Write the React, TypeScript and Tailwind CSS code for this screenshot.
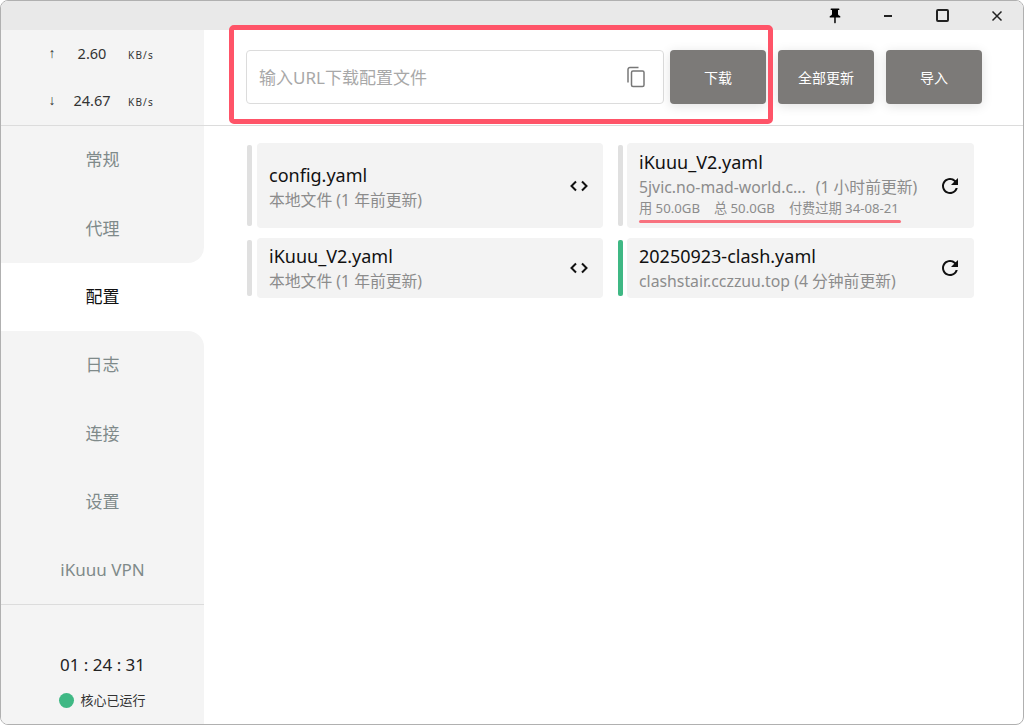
import React from 'react';
import { MdPushPin, MdRefresh } from 'react-icons/md';

const font = { fontFamily: '"Noto Sans", "Noto Sans CJK SC", sans-serif' };

const NAV = ['常规', '代理', '配置', '日志', '连接', '设置', 'iKuuu VPN'];
const ACTIVE = 2;

const CodeIcon = () => (
  <svg width="20" height="20" viewBox="0 0 20 20" fill="none" stroke="#111" strokeWidth="2">
    <path d="M7 5.5 2.5 10 7 14.5" />
    <path d="M13 5.5l4.5 4.5-4.5 4.5" />
  </svg>
);

const CopyIcon = () => (
  <svg width="20" height="22" viewBox="0 0 20 22" fill="none" stroke="#777" strokeWidth="1.5">
    <path d="M2 16.5V3.5a2 2 0 0 1 2-2h8.5" />
    <rect x="5.5" y="5" width="12.5" height="15.5" rx="1.5" />
  </svg>
);

const RefreshIcon = () => <MdRefresh size={24} color="#111" className="-mr-[2px]" />;

const Button = ({ label }: { label: string }) => (
  <button className="w-[96px] h-[54px] rounded-[4px] bg-[#7c7a78] text-white text-[14px] shadow-[0_2px_12px_rgba(0,0,0,0.12)]">
    {label}
  </button>
);

const Traffic = ({ arrow, value }: { arrow: string; value: string }) => (
  <div className="h-[47px] flex items-center">
    <span className="w-[20px] ml-[41px] text-center text-[14px] [font-family:'Liberation_Sans',sans-serif]">{arrow}</span>
    <span className="w-[40px] ml-[10px] text-center text-[14.5px]">{value}</span>
    <span className="ml-[16px] pt-[3px] text-[10px] tracking-[1.2px]">KB/s</span>
  </div>
);

interface CardProps {
  title: string;
  sub: React.ReactNode;
  extra?: React.ReactNode;
  active?: boolean;
  icon: React.ReactNode;
  tall?: boolean;
  right?: boolean;
}

const Card = ({ title, sub, extra, active, icon, tall, right }: CardProps) => (
  <div className={`flex items-stretch ${right ? 'gap-[4px]' : 'gap-[5px]'}`}>
    <div className={`w-[5px] my-[2px] rounded-[2px] ${active ? 'bg-[#3fb884]' : 'bg-[#e0e0e0]'}`} />
    <div className={`flex-1 flex items-center rounded-[4px] bg-[#f3f3f3] pl-[12px] pr-[14px] ${tall ? 'h-[85px]' : 'h-[60px]'}`}>
      <div className={`flex-1 min-w-0 ${extra ? 'mb-[4px]' : tall ? 'pt-[6px]' : 'pt-[3px]'}`}>
        <div className="text-[18px] leading-[24px] text-[#111]">{title}</div>
        <div className="text-[15.8px] leading-[27px] text-[#8c8c8c] whitespace-nowrap">{sub}</div>
        {extra}
      </div>
      {icon}
    </div>
  </div>
);

export default function App() {
  return (
    <div style={font} className="relative w-[1024px] h-[725px] overflow-hidden bg-white">
      <div className="flex flex-col h-full rounded-[8px] border border-[#b0b0b0] overflow-hidden bg-white">
        {/* title bar */}
        <div className="h-[29px] shrink-0 bg-[#e9e9e9] flex items-center justify-end text-[#000]">
          <MdPushPin size={18} className="mr-[40px]" />
          <div className="w-[8px] h-[2px] bg-[#222] mr-[44px]" />
          <div className="w-[13px] h-[13px] border-2 border-[#222] rounded-[2px] mr-[42px]" />
          <svg width="12" height="12" viewBox="0 0 12 12" stroke="#222" strokeWidth="1.5" className="mr-[20px]">
            <path d="M1.5 1.5l9 9M10.5 1.5l-9 9" />
          </svg>
        </div>

        <div className="flex flex-1 min-h-0">
          {/* sidebar */}
          <div className="w-[203px] shrink-0 flex flex-col">
            <div className="h-[96px] shrink-0 bg-[#f4f4f4] border-b border-[#dcdcdc] flex flex-col text-[#333]">
              <Traffic arrow="↑" value="2.60" />
              <Traffic arrow="↓" value="24.67" />
            </div>
            {NAV.map((item, i) => (
              <div
                key={item}
                className={`h-[68.3px] shrink-0 flex items-center justify-center text-[17px] ${
                  i === ACTIVE ? 'bg-white text-[#111]' : 'bg-[#f4f4f4] text-[#7f8a8a]'
                } ${i === ACTIVE - 1 ? 'rounded-br-[16px]' : ''} ${i === ACTIVE + 1 ? 'rounded-tr-[16px]' : ''}`}
              >
                {item}
              </div>
            ))}
            <div className="flex-1 bg-[#f4f4f4] border-t border-[#dcdcdc] flex flex-col items-center text-[#222]">
              <div className="mt-[48px] text-[17px] leading-[24px]">01 : 24 : 31</div>
              <div className="mt-[14px] flex items-center gap-[6px] text-[13px] text-[#333]">
                <span className="w-[15px] h-[15px] rounded-full bg-[#3fb884]" />
                核心已运行
              </div>
            </div>
          </div>

          {/* content */}
          <div className="flex-1 min-w-0 flex flex-col">
            <div className="h-[96px] shrink-0 border-b border-[#dcdcdc] flex items-center pl-[42px] pr-[41px] pb-[1px]">
              <div className="w-[418px] h-[54px] rounded-[4px] border border-[#dcdcdc] flex items-center justify-between pl-[12px] pr-[17px]">
                <span className="pt-[1px] text-[17px] text-[#a8a8a8]">输入URL下载配置文件</span>
                <CopyIcon />
              </div>
              <div className="ml-[6px]"><Button label="下载" /></div>
              <div className="ml-[12px]"><Button label="全部更新" /></div>
              <div className="ml-[12px]"><Button label="导入" /></div>
            </div>

            <div className="grid grid-cols-[356px_356px] gap-x-[15px] gap-y-[10px] pl-[43px] pt-[17px] items-start">
              <Card tall title="config.yaml" sub="本地文件 (1 年前更新)" icon={<CodeIcon />} />
              <Card
                tall
                right
                title="iKuuu_V2.yaml"
                sub={<>5jvic.no-mad-world.c...<span className="ml-[10px]">(1 小时前更新)</span></>}
                extra={
                  <div className="relative flex gap-[14px] -mt-[3px] text-[13.2px] leading-[20px] text-[#8c8c8c] whitespace-nowrap">
                    <span>用 50.0GB</span>
                    <span>总 50.0GB</span>
                    <span>付费过期 34-08-21</span>
                    <div className="absolute left-0 top-[22px] w-[262px] h-[3px] rounded-full bg-[#f8727f]" />
                  </div>
                }
                icon={<RefreshIcon />}
              />
              <Card title="iKuuu_V2.yaml" sub="本地文件 (1 年前更新)" icon={<CodeIcon />} />
              <Card right active title="20250923-clash.yaml" sub="clashstair.cczzuu.top (4 分钟前更新)" icon={<RefreshIcon />} />
            </div>
          </div>
        </div>
      </div>

      {/* highlight drawn over the toolbar */}
      <div className="absolute left-[229px] top-[25px] w-[544px] h-[99px] rounded-[5px] border-[5px] border-[#ff5468]" />
    </div>
  );
}
